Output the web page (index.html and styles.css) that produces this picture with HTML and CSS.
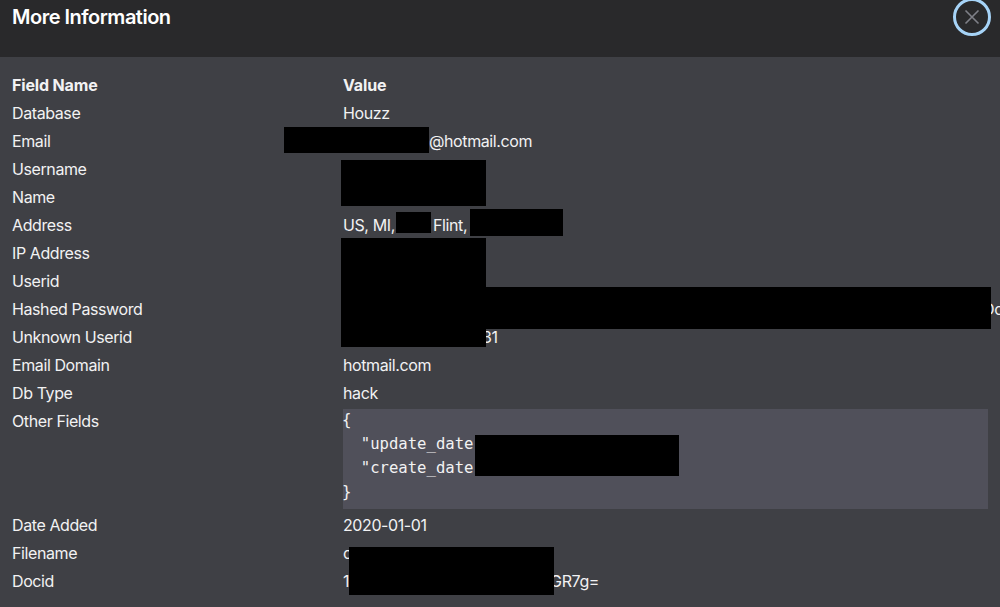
FILE: index.html
```html
<!DOCTYPE html>
<html lang="en">
<head>
    <meta charset="UTF-8">
    <meta name="viewport" content="width=device-width, initial-scale=1.0">
    <title>More Information</title>
    <link rel="stylesheet" href="styles.css">
</head>
<body>
    <header class="modal-header">
        <h1>More Information</h1>
        <button class="close" aria-label="Close">
            <svg width="16" height="16" viewBox="0 0 16 16"><path d="M1.5 1.5 14.5 14.5M14.5 1.5 1.5 14.5"/></svg>
        </button>
    </header>
    <main class="modal-body">
        <table class="fields">
            <tr><th>Field Name</th><th>Value</th></tr>
            <tr><td>Database</td><td>Houzz</td></tr>
            <tr><td>Email</td><td><span class="hid hid-email"></span>@hotmail.com</td></tr>
            <tr><td>Username</td><td></td></tr>
            <tr><td>Name</td><td></td></tr>
            <tr><td>Address</td><td>US, MI, <span class="hid hid-zip"></span> Flint, </td></tr>
            <tr><td>IP Address</td><td></td></tr>
            <tr><td>Userid</td><td></td></tr>
            <tr><td>Hashed Password</td><td><span class="hid hid-hash"></span>Dc</td></tr>
            <tr><td>Unknown Userid</td><td><span class="hid hid-unknown"></span>31</td></tr>
            <tr><td>Email Domain</td><td>hotmail.com</td></tr>
            <tr><td>Db Type</td><td>hack</td></tr>
            <tr><td>Other Fields</td><td><pre class="code"><code>{
  "update_date
  "create_date
}</code></pre></td></tr>
            <tr><td>Date Added</td><td>2020-01-01</td></tr>
            <tr><td>Filename</td><td>c</td></tr>
            <tr><td>Docid</td><td>1<span class="hid hid-docid"></span>GR7g=</td></tr>
        </table>

        <!-- black boxes painted over the private values -->
        <div class="box box-email"></div>
        <div class="box box-user"></div>
        <div class="box box-zip"></div>
        <div class="box box-street"></div>
        <div class="box box-ip"></div>
        <div class="box box-hash"></div>
        <div class="box box-dates"></div>
        <div class="box box-file"></div>
    </main>
</body>
</html>
```

FILE: styles.css
```css
html, body {
    height: 100%;
}
body {
    margin: 0;
    background-color: #3f4045;
    color: #f2f2f3;
    font-family: Inter, "Liberation Sans", sans-serif;
    font-size: 16px;
    letter-spacing: -0.4px;
    overflow: hidden;
}
.modal-header {
    display: flex;
    justify-content: space-between;
    align-items: flex-start;
    height: 57px;
    padding: 0 9px 0 12px;
    background-color: #29292b;
}
.modal-header h1 {
    margin: 3px 0 0;
    font-size: 20px;
    line-height: 28px;
    font-weight: 600;
    letter-spacing: -0.5px;
    color: #fff;
}
.close {
    display: flex;
    align-items: center;
    justify-content: center;
    width: 38px;
    height: 38px;
    margin-top: -2px;
    padding: 0;
    background: none;
    border: 3px solid #a6d3f7;
    border-radius: 50%;
}
.close svg {
    stroke: #7f8088;
    stroke-width: 1.6;
    fill: none;
}
.modal-body {
    position: relative;
    padding: 14px 12px 0;
}
.fields {
    width: 976px;
    table-layout: fixed;
    border-collapse: collapse;
}
.fields th, .fields td {
    padding: 2px 0;
    line-height: 24px;
    text-align: left;
    vertical-align: top;
    white-space: nowrap;
}
.fields th {
    font-weight: 700;
    letter-spacing: -0.15px;
}
.fields th:first-child {
    width: 331px;
}
.hid {
    display: inline-block;
}
.hid-email {
    width: 86px;
}
.hid-zip {
    width: 30px;
}
.hid-hash {
    width: 640px;
}
.hid-unknown {
    width: 139px;
}
.hid-docid {
    width: 201px;
}
.code {
    display: flow-root;
    margin: 0;
    padding: 0 0 4px;
    height: 96px;
    background-color: #50505a;
    line-height: 24px;
    letter-spacing: 0;
}
.code code {
    display: block;
    margin: -1px 0 0 -1px;
    font-family: "DejaVu Sans Mono", monospace;
    font-size: 15.6px;
}
.box {
    position: absolute;
    background-color: #000;
}
/* offsets are from the top of the body panel, y = 57 */
.box-email {
    left: 284px;
    top: 70px;
    width: 145px;
    height: 26px;
}
.box-user {
    left: 341px;
    top: 103px;
    width: 145px;
    height: 46px;
}
.box-zip {
    left: 396px;
    top: 155px;
    width: 35px;
    height: 21px;
}
.box-street {
    left: 470px;
    top: 152px;
    width: 93px;
    height: 27px;
}
.box-ip {
    left: 341px;
    top: 181px;
    width: 145px;
    height: 109px;
}
.box-hash {
    left: 486px;
    top: 230px;
    width: 505px;
    height: 42px;
}
.box-dates {
    left: 475px;
    top: 378px;
    width: 204px;
    height: 41px;
}
.box-file {
    left: 349px;
    top: 490px;
    width: 205px;
    height: 48px;
}
```
